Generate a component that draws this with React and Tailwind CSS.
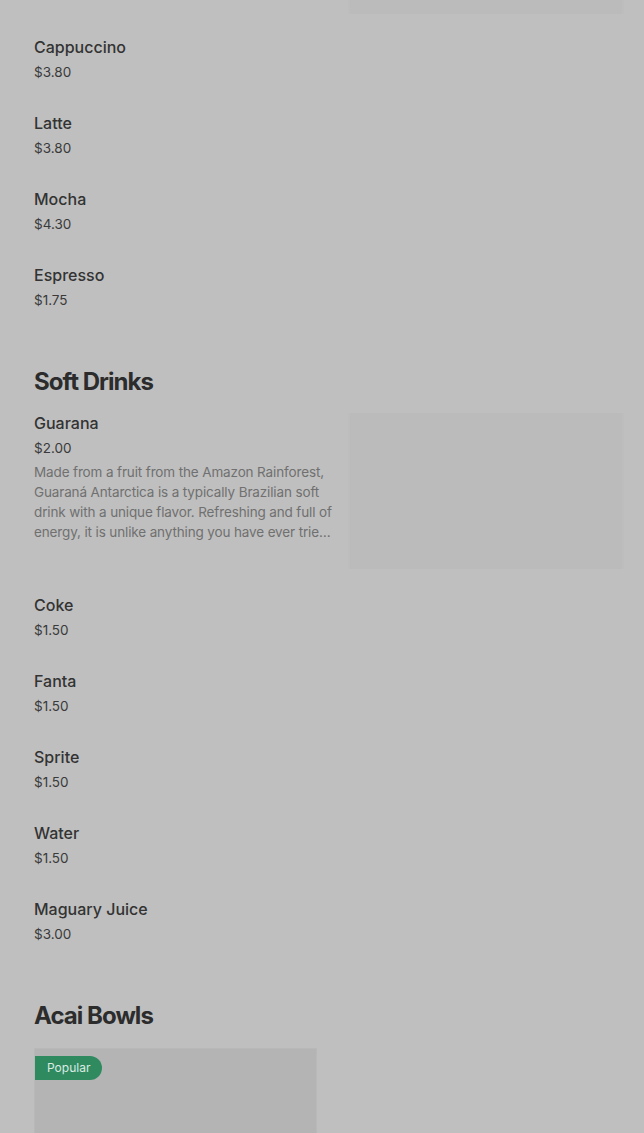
const coffee = [
  { name: "Cappuccino", price: "$3.80" },
  { name: "Latte", price: "$3.80" },
  { name: "Mocha", price: "$4.30" },
  { name: "Espresso", price: "$1.75" },
];

const softDrinks = [
  { name: "Coke", price: "$1.50" },
  { name: "Fanta", price: "$1.50" },
  { name: "Sprite", price: "$1.50" },
  { name: "Water", price: "$1.50" },
  { name: "Maguary Juice", price: "$3.00" },
];

function PlainItem({ name, price }) {
  return (
    <div className="pb-[29px]">
      <p className="text-[16px] leading-6 font-medium text-[#333333]">{name}</p>
      <p className="mt-[3px] text-[13.5px] leading-5 text-[#3a3a3a]">{price}</p>
    </div>
  );
}

export default function App() {
  return (
    <div className="min-h-screen h-[1133px] overflow-hidden bg-[#bfbfbf] font-['Inter',sans-serif]">
      <div className="pl-[34px] pr-[20px]">
        <div className="flex justify-end">
          <div className="w-[276px] h-[14px] bg-[#bbbbbb] border-x-2 border-[#bdbdbd]" />
        </div>

        <div className="mt-[21px]">
          {coffee.map((item) => (
            <PlainItem key={item.name} {...item} />
          ))}
        </div>

        <h2 className="mt-[27px] text-[24px] leading-8 font-bold tracking-[-0.04em] text-[#2c2c2c]">
          Soft Drinks
        </h2>

        <div className="mt-[13px]">
          <div className="flex gap-[10px] pb-[24px]">
            <div className="flex-1 min-w-0">
              <p className="text-[16px] leading-6 font-medium text-[#333333]">Guarana</p>
              <p className="mt-[3px] text-[13.5px] leading-5 text-[#3a3a3a]">$2.00</p>
              <p className="mt-[4px] text-[13.5px] leading-5 tracking-[-0.01em] text-[#707070] line-clamp-4">
                Made from a fruit from the Amazon Rainforest, Guaraná Antarctica is a typically
                Brazilian soft drink with a unique flavor. Refreshing and full of energy, it is
                unlike anything you have ever tried before.
              </p>
            </div>
            <div className="mt-[2px] w-[276px] h-[156px] shrink-0 bg-[#bbbbbb] border-x-2 border-[#bdbdbd]" />
          </div>

          {softDrinks.map((item) => (
            <PlainItem key={item.name} {...item} />
          ))}
        </div>

        <h2 className="mt-[27px] text-[24px] leading-8 font-bold tracking-[-0.04em] text-[#2c2c2c]">
          Acai Bowls
        </h2>

        <div className="mt-[16px] grid grid-cols-2 gap-6">
          <div className="relative h-[200px] bg-[#b4b4b4] border border-[#b8b8b8]">
            <span className="absolute left-0 top-[7px] h-6 px-3 flex items-center rounded-r-full bg-[#2f8a60] text-[12px] text-[#dcebe2]">
              Popular
            </span>
          </div>
          <div className="h-[200px]" />
        </div>
      </div>
    </div>
  );
}
